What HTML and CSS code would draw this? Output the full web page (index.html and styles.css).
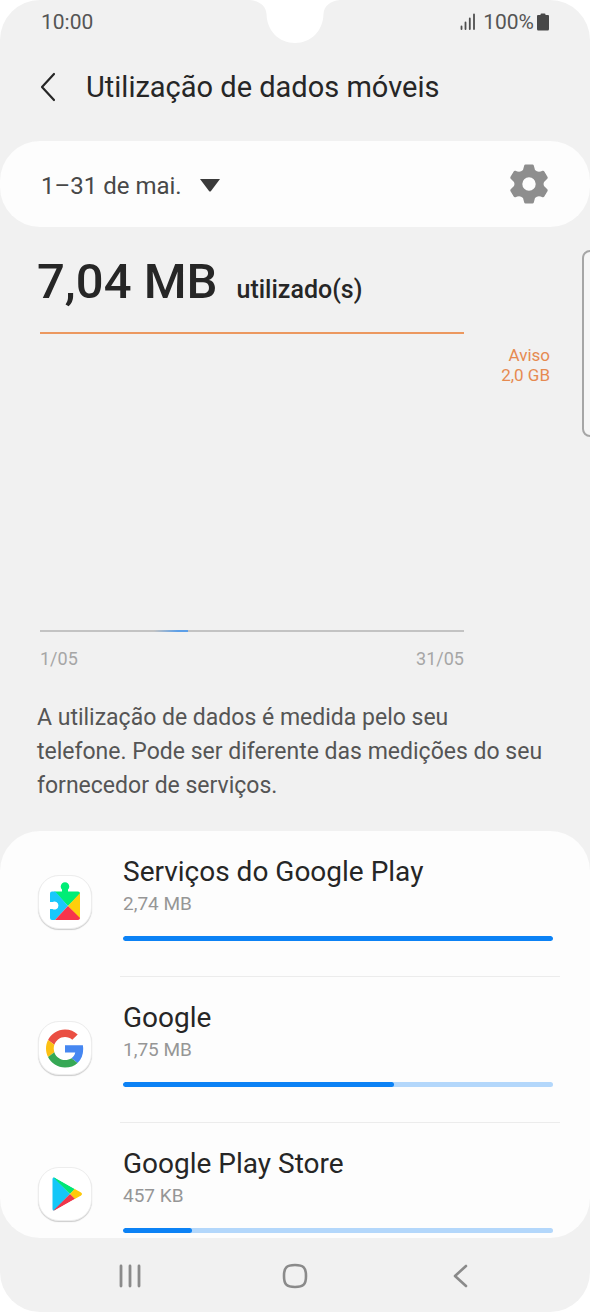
FILE: index.html
```html
<!DOCTYPE html>
<html lang="pt">
<head>
<meta charset="utf-8">
<meta name="viewport" content="width=device-width, initial-scale=1">
<title>Utilização de dados móveis</title>
<link rel="stylesheet" href="styles.css">
</head>
<body>
<div class="screen">
  <svg class="notch" viewBox="0 0 90 44" aria-hidden="true"><path d="M0 0C10 1 16 6 16.500 14C17 31 29 43 45 43S73 31 73.500 14C74 6 80 1 90 0Z" fill="#fff"/></svg>

  <div class="status">
    <span>10:00</span>
    <span class="status-right">
      <svg width="16" height="18" viewBox="0 0 16 18" aria-hidden="true"><path d="M1.500 13.500V16M5.500 9.500V16M9.800 5.500V16M14 1.500V16" stroke="#4f4f4f" stroke-width="1.800" stroke-linecap="round"/></svg>
      <span class="percent">100%</span>
      <svg width="12" height="18" viewBox="0 0 12 18" aria-hidden="true"><path d="M3.500 2V1.500Q3.500 .5 4.500 .5H7.500Q8.500 .5 8.500 1.500V2H11Q12 2 12 3V16Q12 17.500 10.800 17.500H1.200Q0 17.500 0 16V3Q0 2 1 2Z" fill="#484848"/></svg>
    </span>
  </div>

  <header class="title-bar">
    <button class="icon-button" type="button" aria-label="Voltar">
      <svg width="16" height="30" viewBox="0 0 16 30"><path d="M14 2L2 15L14 28" fill="none" stroke="#262626" stroke-width="2.200" stroke-linecap="round" stroke-linejoin="round"/></svg>
    </button>
    <h1>Utilização de dados móveis</h1>
  </header>

  <div class="period-card">
    <div class="period">
      <select class="period-select" aria-label="Período">
        <option>1–31 de mai.</option>
      </select>
      <svg width="20" height="13" viewBox="0 0 20 13" aria-hidden="true"><path d="M0 0H20L11 12Q10 13 9 12Z" fill="#3a3a3a"/></svg>
    </div>
    <button class="icon-button" type="button" aria-label="Definições">
      <svg width="38" height="40" viewBox="0 0 38 40"><path fill="#8e8e8e" fill-rule="evenodd" d="M15.500 .5H22.500Q23.500 .5 23.800 1.500L25 6Q28 9 32.500 6.800Q33.800 6.500 34.300 7.500L37.600 13Q38 14 37.300 14.700L34 18Q33 20 34 22L37.300 25.300Q38 26 37.600 27L34.300 32.500Q33.800 33.500 32.500 33.200Q28 31 25 34L23.800 38.500Q23.500 39.500 22.500 39.500H15.500Q14.500 39.500 14.200 38.500L13 34Q10 31 5.500 33.200Q4.200 33.500 3.700 32.500L.4 27Q0 26 .7 25.300L4 22Q5 20 4 18L.7 14.700Q0 14 .4 13L3.700 7.500Q4.200 6.500 5.500 6.800Q10 9 13 6L14.200 1.500Q14.500 .5 15.500 .5ZM19 13.300A6.700 6.700 0 1 0 19 26.700A6.700 6.700 0 1 0 19 13.300Z"/></svg>
    </button>
  </div>

  <main class="content">
    <section class="usage">
      <p class="total"><strong>7,04 MB</strong> <span>utilizado(s)</span></p>
      <div class="chart">
        <div class="plot"><span class="trace"></span></div>
        <p class="warning">Aviso<br>2,0 GB</p>
        <div class="dates"><span>1/05</span><span>31/05</span></div>
      </div>
      <p class="note">A utilização de dados é medida pelo seu<br>telefone. Pode ser diferente das medições do seu fornecedor de serviços.</p>
    </section>

    <ul class="apps">
      <li class="app">
        <span class="app-icon">
          <svg width="32" height="40" viewBox="0 0 32 40" aria-hidden="true">
            <defs><clipPath id="puzzle"><circle cx="16" cy="4.500" r="4.300"/><path d="M3 9.500H13V6H19V9.500H29Q31 9.500 31 11.500V36Q31 38 29 38H3Q1 38 1 36V27H3.500A4 4 0 1 0 3.500 20H1V11.500Q1 9.500 3 9.500Z"/></clipPath></defs>
            <g clip-path="url(#puzzle)"><path d="M0 0H32V11L19 24L5 9H0Z" fill="#00ed76"/><path d="M0 8H5L19 24L5 39H0Z" fill="#19c8fb"/><path d="M32 10V38L19 24Z" fill="#ffcf0b"/><path d="M19 24L32 37V39H5Z" fill="#f7344b"/></g>
          </svg>
        </span>
        <div class="app-body">
          <h2 id="app-1">Serviços do Google Play</h2>
          <p>2,74 MB</p>
          <progress max="100" value="100" aria-labelledby="app-1"></progress>
        </div>
      </li>
      <li class="app">
        <span class="app-icon">
          <svg width="38" height="39" viewBox="0 0 48 48" aria-hidden="true">
            <path fill="#ea4f43" d="M24 9.500c3.540 0 6.710 1.220 9.210 3.600l6.850-6.850C35.900 2.380 30.470 0 24 0 14.620 0 6.510 5.380 2.560 13.220l7.980 6.190C12.430 13.720 17.740 9.500 24 9.500z"/>
            <path fill="#4687f1" d="M46.980 24.550c0-1.570-.150-3.090-.380-4.550H24v9.020h12.940c-.580 2.960-2.260 5.480-4.780 7.180l7.730 6c4.510-4.180 7.090-10.360 7.090-17.650z"/>
            <path fill="#fcc013" d="M10.530 28.590c-.480-1.450-.760-2.990-.760-4.590s.270-3.140.760-4.590l-7.980-6.190C.920 16.460 0 20.120 0 24c0 3.880.920 7.540 2.560 10.780l7.970-6.190z"/>
            <path fill="#36a855" d="M24 48c6.480 0 11.930-2.130 15.890-5.810l-7.730-6c-2.150 1.450-4.920 2.300-8.160 2.300-6.260 0-11.570-4.220-13.470-9.910l-7.980 6.190C6.510 42.620 14.620 48 24 48z"/>
          </svg>
        </span>
        <div class="app-body">
          <h2 id="app-2">Google</h2>
          <p>1,75 MB</p>
          <progress max="100" value="63" aria-labelledby="app-2"></progress>
        </div>
      </li>
      <li class="app">
        <span class="app-icon">
          <svg class="play" width="32" height="36" viewBox="0 0 32 36" aria-hidden="true">
            <defs><clipPath id="play"><path d="M3.500 1.500L30 16.500Q32 18 30 19.500L3.500 34.500Q1.500 35 1.500 33V3Q1.500 1 3.500 1.500Z"/></clipPath></defs>
            <g clip-path="url(#play)"><path d="M0 0H2L19 18L2 36H0Z" fill="#14c7f8"/><path d="M1 0L24 13L19 18Z" fill="#00e676"/><path d="M24 12.500L34 18L24 23.500L19 18Z" fill="#ffc90a"/><path d="M1 36L24 23L19 18Z" fill="#f0364b"/></g>
          </svg>
        </span>
        <div class="app-body">
          <h2 id="app-3">Google Play Store</h2>
          <p>457 KB</p>
          <progress max="100" value="16" aria-labelledby="app-3"></progress>
        </div>
      </li>
    </ul>
    <span class="edge-handle"></span>
  </main>

  <nav class="nav" aria-label="Navegação">
    <button class="icon-button" type="button" aria-label="Recentes">
      <svg width="24" height="24" viewBox="0 0 24 24"><path d="M3 2V22M12 2V22M21 2V22" stroke="#8a8a8a" stroke-width="2.800" stroke-linecap="round"/></svg>
    </button>
    <button class="icon-button" type="button" aria-label="Início">
      <svg width="26" height="26" viewBox="0 0 26 26"><path d="M13 2C21.500 2 24 4.500 24 13S21.500 24 13 24S2 21.500 2 13S4.500 2 13 2Z" fill="none" stroke="#8a8a8a" stroke-width="2.600"/></svg>
    </button>
    <button class="icon-button" type="button" aria-label="Anterior">
      <svg width="24" height="24" viewBox="0 0 24 24"><path d="M18 2L7 12L18 22" fill="none" stroke="#8a8a8a" stroke-width="2.600" stroke-linecap="round" stroke-linejoin="round"/></svg>
    </button>
  </nav>
</div>
</body>
</html>
```
FILE: styles.css
```css
* {
  box-sizing: border-box;
}

body,
h1,
h2,
p,
ul {
  margin: 0;
  padding: 0;
}

body {
  background: #fff;
  color: #262626;
  font-family: Roboto, "Noto Sans", sans-serif;
}

svg {
  display: block;
  flex: none;
}

.screen {
  position: relative;
  display: flex;
  flex-direction: column;
  min-height: 100vh;
  overflow: hidden;
  border-radius: 40px;
  background: #f1f1f1;
}

.notch {
  position: absolute;
  top: 0;
  left: 50%;
  width: 90px;
  margin-left: -45px;
}

.icon-button {
  display: grid;
  place-items: center;
  padding: 0;
  border: 0;
  background: none;
  cursor: pointer;
}

.status {
  display: flex;
  align-items: center;
  justify-content: space-between;
  height: 44px;
  padding: 0 41px;
  color: #555;
  font-size: 21px;
}

.status-right {
  display: flex;
  align-items: center;
}

.percent {
  margin: 0 3px 0 7px;
}

.title-bar {
  display: flex;
  align-items: center;
  gap: 30px;
  height: 86px;
  padding: 0 40px;
}

h1 {
  font-size: 29px;
  font-weight: 400;
  line-height: 36px;
}

.period-card {
  display: flex;
  align-items: center;
  justify-content: space-between;
  height: 86px;
  margin-top: 11px;
  padding: 0 42px 0 41px;
  border-radius: 40px;
  background: #fdfdfd;
}

.period {
  display: flex;
  align-items: center;
  gap: 18px;
  padding-top: 3px;
}

.period-select {
  appearance: none;
  padding: 0;
  border: 0;
  background: none;
  color: #484848;
  font: 400 24px/32px Roboto, "Noto Sans", sans-serif;
}

.content {
  position: relative;
  flex: 1;
}

.usage {
  padding: 25px 37px 28px;
}

.total {
  display: flex;
  align-items: baseline;
  gap: 19px;
  font-size: 25px;
  font-weight: 500;
  line-height: 60px;
}

.total strong {
  font-size: 49px;
  font-weight: 500;
}

.chart {
  display: grid;
  grid-template-columns: 1fr 86px;
  margin: 12px 3px 0;
  font-size: 18px;
  line-height: 20px;
}

.plot {
  position: relative;
  height: 300px;
  border-top: 2px solid #ec985f;
  border-bottom: 2px solid #c3c3c3;
}

.trace {
  position: absolute;
  bottom: -2px;
  left: 27%;
  width: 8%;
  height: 2px;
  background: linear-gradient(90deg, #c3c3c3, #5c9fe8 70%);
}

.warning {
  padding-top: 13px;
  color: #e68a50;
  font-size: 17px;
  text-align: right;
}

.dates {
  display: flex;
  justify-content: space-between;
  padding-top: 17px;
  color: #a6a6a6;
}

.note {
  margin-top: 32px;
  color: #555;
  font-size: 23px;
  line-height: 34px;
}

.apps {
  height: 407px;
  overflow: hidden;
  border-radius: 40px;
  background: #fdfdfd;
  list-style: none;
}

.app {
  display: flex;
  gap: 28px;
  height: 146px;
  padding: 0 30px 0 38px;
}

.app-icon {
  display: grid;
  flex: none;
  place-items: center;
  width: 54px;
  height: 54px;
  margin-top: 44px;
  border: 1px solid #ededed;
  border-radius: 21px;
  background: #fff;
  box-shadow: 0 1px 1px #ccc;
}

.play {
  margin-left: 3px;
}

.app-body {
  flex: 1;
  padding: 24px 7px 0 3px;
  border-bottom: 1px solid #ececec;
}

h2 {
  font-size: 28px;
  font-weight: 400;
  line-height: 34px;
}

.app-body p {
  color: #969696;
  font-size: 19px;
  line-height: 30px;
}

progress {
  display: block;
  appearance: none;
  width: 100%;
  height: 5px;
  margin-top: 17px;
  overflow: hidden;
  border: 0;
  border-radius: 3px;
  background: #b3d7fb;
}

progress::-webkit-progress-bar {
  background: #b3d7fb;
}

progress::-webkit-progress-value {
  border-radius: 3px;
  background: #0c82f5;
}

.edge-handle {
  position: absolute;
  top: 23px;
  right: -8px;
  width: 16px;
  height: 187px;
  border: 2px solid #a6a6a6;
  border-radius: 8px;
  background: #f6f6f6;
}

.nav {
  display: grid;
  grid-template-columns: repeat(3, 1fr);
  height: 74px;
  padding: 2px 48px 0;
}
```
